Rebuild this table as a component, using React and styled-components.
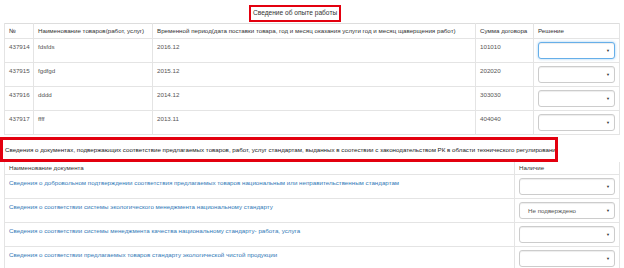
import React from "react";
import styled, { createGlobalStyle } from "styled-components";

const GlobalStyle = createGlobalStyle`
  html, body {
    margin: 0;
    padding: 0;
    background: #fff;
  }
  body {
    font-family: "Liberation Sans", Arial, sans-serif;
    font-size: 6.2px;
    color: #444;
  }
`;

const experience = [
  { id: "437914", name: "fdsfds", period: "2016.12", sum: "101010", focused: true },
  { id: "437915", name: "fgdfgd", period: "2015.12", sum: "202020" },
  { id: "437916", name: "dddd", period: "2014.12", sum: "303030" },
  { id: "437917", name: "ffff", period: "2013.11", sum: "404040" },
];

const documents = [
  {
    title:
      "Сведения о добровольном подтверждении соответствия предлагаемых товаров национальным или неправительственным стандартам",
    value: "",
  },
  {
    title:
      "Сведения о соответствии системы экологического менеджмента национальному стандарту",
    value: "Не подверждено",
  },
  {
    title:
      "Сведения о соответствии системы менеджмента качества национальному стандарту- работа, услуга",
    value: "",
  },
  {
    title:
      "Сведения о соответствии предлагаемых товаров стандарту экологической чистой продукции",
    value: "",
  },
];

const App = () => {
  return (
    <Page>
      <GlobalStyle />
      <TitleRow>
        <Highlight>Сведение об опыте работы</Highlight>
      </TitleRow>

      <Table>
        <colgroup>
          <col style={{ width: 29 }} />
          <col style={{ width: 119 }} />
          <col style={{ width: 323 }} />
          <col style={{ width: 58 }} />
          <col />
        </colgroup>
        <thead>
          <tr>
            <Th>№</Th>
            <Th>Наименование товаров(работ, услуг)</Th>
            <Th>
              Временной период(дата поставки товара, год и месяц оказания услуги
              год и месяц щаверщения работ)
            </Th>
            <Th>Сумма договора</Th>
            <Th>Решение</Th>
          </tr>
        </thead>
        <tbody>
          {experience.map((row) => (
            <tr key={row.id}>
              <Td>{row.id}</Td>
              <Td>{row.name}</Td>
              <Td>{row.period}</Td>
              <Td>{row.sum}</Td>
              <Td>
                <Select focused={row.focused} />
              </Td>
            </tr>
          ))}
        </tbody>
      </Table>

      <Caption>
        Сведения о документах, подвержающих соответствие предлагаемых товаров,
        работ, услуг стандартам, выданных в соотествии с законодательством РК в
        области технического регулирования
      </Caption>

      <Table $noTop>
        <colgroup>
          <col style={{ width: 510 }} />
          <col />
        </colgroup>
        <thead>
          <tr>
            <Th $short>Наименование документа</Th>
            <Th $short>Наличие</Th>
          </tr>
        </thead>
        <tbody>
          {documents.map((doc) => (
            <tr key={doc.title}>
              <Td>
                <DocLink href="#">{doc.title}</DocLink>
              </Td>
              <Td>
                <Select value={doc.value} />
              </Td>
            </tr>
          ))}
        </tbody>
      </Table>
    </Page>
  );
};

const Select = ({ value, focused }) => (
  <SelectBox $focused={focused}>
    <span>{value}</span>
    <Caret>▼</Caret>
  </SelectBox>
);

const Page = styled.div`
  width: 624px;
  height: 268px;
  overflow: hidden;
  padding: 0 4px;
  box-sizing: border-box;
`;

const TitleRow = styled.div`
  display: flex;
  padding: 5px 0 1px 245px;
`;

const Highlight = styled.div`
  border: 2px solid #e3000f;
  padding: 2px 2px 3px 2px;
  line-height: 8px;
  font-size: 6.6px;
  color: #333;
`;

const Table = styled.table`
  width: 616px;
  border-collapse: collapse;
  table-layout: fixed;
  border: 1px solid #ddd;
  ${(p) => (p.$noTop ? "border-top: none;" : "")}
`;

const Th = styled.th`
  text-align: left;
  font-weight: normal;
  color: #333;
  padding: ${(p) => (p.$short ? "2px 4px 2px" : "3px 4px 3px")};
  height: 8px;
  line-height: 8px;
  border: 1px solid #e4e4e4;
  border-top: none;
  white-space: nowrap;
  overflow: hidden;
`;

const Td = styled.td`
  vertical-align: top;
  padding: 3px 4px 3px;
  height: 17px;
  line-height: 9px;
  border: 1px solid #e4e4e4;
  white-space: nowrap;
  color: #555;
`;

const SelectBox = styled.div`
  position: relative;
  display: flex;
  align-items: center;
  height: 15px;
  padding: 0 8px;
  border: 1px solid ${(p) => (p.$focused ? "#66afe9" : "#ccc")};
  border-radius: 3px;
  box-shadow: ${(p) =>
    p.$focused
      ? "inset 0 1px 1px rgba(0,0,0,.075), 0 0 3px rgba(102,175,233,.6)"
      : "inset 0 1px 1px rgba(0,0,0,.075)"};
  color: #555;
  background: #fff;
`;

const Caret = styled.span`
  position: absolute;
  right: 4px;
  top: 5px;
  font-size: 4px;
  line-height: 5px;
  color: #333;
`;

const Caption = styled.div`
  margin-top: 2px;
  margin-left: -4px;
  width: 558px;
  box-sizing: border-box;
  border: 3px solid #e3000f;
  padding: 5px 2px 5px 2px;
  line-height: 9px;
  color: #222;
  white-space: nowrap;
  overflow: hidden;
`;

const DocLink = styled.a`
  color: #337ab7;
  text-decoration: none;
`;

export default App;
